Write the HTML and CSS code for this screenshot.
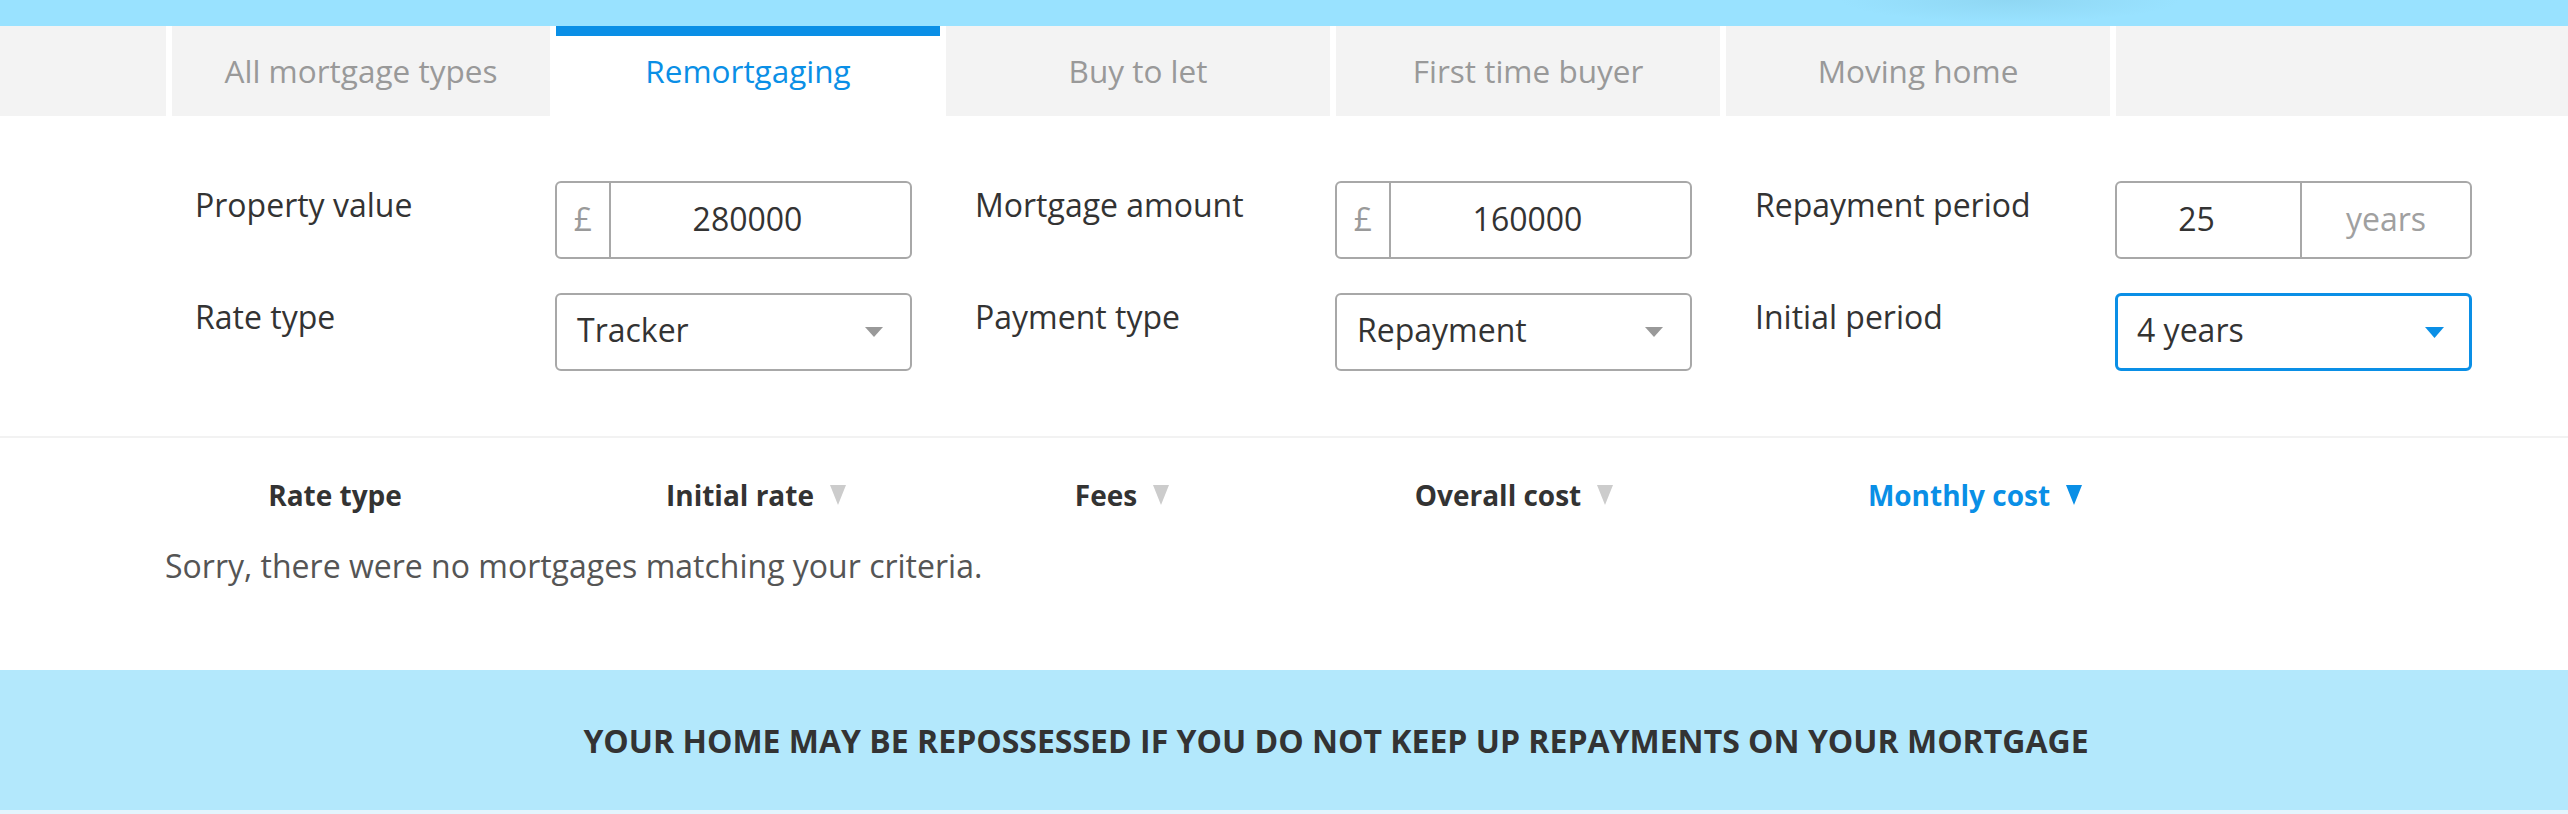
FILE: index.html
```html
<!DOCTYPE html>
<html lang="en">
<head>
<meta charset="utf-8">
<title>Mortgage calculator</title>
<link rel="stylesheet" href="styles.css">
</head>
<body>
<div class="topbar"></div>
<nav class="tabs">
  <div class="tab-spacer"></div>
  <a class="tab tab-first">All mortgage types</a>
  <a class="tab active">Remortgaging</a>
  <a class="tab">Buy to let</a>
  <a class="tab">First time buyer</a>
  <a class="tab">Moving home</a>
  <div class="tab-spacer tab-spacer-end"></div>
</nav>

<section class="calc">
  <div class="field">
    <span class="label">Property value</span>
    <div class="control group">
      <span class="prefix">£</span>
      <span class="value">280000</span>
    </div>
  </div>
  <div class="field">
    <span class="label">Mortgage amount</span>
    <div class="control group">
      <span class="prefix">£</span>
      <span class="value">160000</span>
    </div>
  </div>
  <div class="field">
    <span class="label">Repayment period</span>
    <div class="control group">
      <span class="value value-years">25</span>
      <span class="suffix">years</span>
    </div>
  </div>
  <div class="field">
    <span class="label">Rate type</span>
    <div class="control select">
      <span class="select-text">Tracker</span>
      <svg class="caret" width="18" height="10" viewBox="0 0 18 10"><polygon points="0,0 18,0 9,10" fill="#999"/></svg>
    </div>
  </div>
  <div class="field">
    <span class="label">Payment type</span>
    <div class="control select">
      <span class="select-text">Repayment</span>
      <svg class="caret" width="18" height="10" viewBox="0 0 18 10"><polygon points="0,0 18,0 9,10" fill="#999"/></svg>
    </div>
  </div>
  <div class="field">
    <span class="label">Initial period</span>
    <div class="control select focused">
      <span class="select-text">4 years</span>
      <svg class="caret" width="19" height="11" viewBox="0 0 19 11"><polygon points="0,0 19,0 9.5,11" fill="#0a8fe6"/></svg>
    </div>
  </div>
</section>

<section class="results">
  <div class="headers">
    <span class="col">Rate type</span>
    <span class="col">Initial rate <svg class="sort" width="20" height="20" viewBox="0 0 20 20"><polygon points="2,0 18,0 10,20" fill="#cccccc"/></svg></span>
    <span class="col">Fees <svg class="sort" width="20" height="20" viewBox="0 0 20 20"><polygon points="2,0 18,0 10,20" fill="#cccccc"/></svg></span>
    <span class="col">Overall cost <svg class="sort" width="20" height="20" viewBox="0 0 20 20"><polygon points="2,0 18,0 10,20" fill="#cccccc"/></svg></span>
    <span class="col col-active">Monthly cost <svg class="sort" width="20" height="20" viewBox="0 0 20 20"><polygon points="2,0 18,0 10,20" fill="#0a8fe6"/></svg></span>
  </div>
  <p class="empty">Sorry, there were no mortgages matching your criteria.</p>
</section>

<footer class="warning">YOUR HOME MAY BE REPOSSESSED IF YOU DO NOT KEEP UP REPAYMENTS ON YOUR MORTGAGE</footer>
</body>
</html>
```

FILE: styles.css
```css
html, body {
  margin: 0;
  padding: 0;
  background: #ffffff;
  font-family: "Open Sans", "Noto Sans", "Liberation Sans", sans-serif;
  color: #333333;
  overflow: hidden;
}

.topbar {
  height: 26px;
  background:
    radial-gradient(ellipse 170px 22px at 2010px 0px, rgba(110, 175, 200, 0.22), rgba(110, 175, 200, 0) 100%),
    #99e2ff;
}

.tabs {
  display: flex;
  gap: 6px;
  height: 90px;
  background: #ffffff;
}

.tab-spacer {
  width: 166px;
  background: #f3f3f3;
}

.tab-spacer-end {
  flex: 1;
}

.tab {
  width: 384px;
  background: #f3f3f3;
  color: #999999;
  font-size: 31.5px;
  line-height: 90px;
  text-align: center;
  text-decoration: none;
}

.tab-first {
  width: 378px;
}

.tab.active {
  background: #ffffff;
  color: #0a8fe6;
  box-shadow: inset 0 10px 0 #0a8fe6;
}

.calc {
  display: grid;
  grid-template-columns: repeat(3, 780px);
  row-gap: 34px;
  padding: 65px 0 65px 195px;
}

.field {
  display: flex;
  align-items: flex-start;
}

.label {
  width: 360px;
  font-size: 32px;
  line-height: 48px;
  color: #333333;
}

.control {
  box-sizing: border-box;
  width: 357px;
  height: 78px;
  border: 2px solid #a8a8a8;
  border-radius: 6px;
  font-size: 32px;
  color: #333333;
}

.group {
  display: flex;
  align-items: stretch;
}

.prefix {
  width: 52px;
  border-right: 2px solid #a8a8a8;
  color: #9a9a9a;
  display: flex;
  align-items: center;
  justify-content: center;
  padding-bottom: 3px;
}

.value {
  flex: 1;
  display: flex;
  align-items: center;
  justify-content: center;
  padding-right: 26px;
  padding-bottom: 3px;
}

.value-years {
  flex: 0 0 183px;
  box-sizing: border-box;
  padding-right: 24px;
}

.suffix {
  flex: 1;
  border-left: 2px solid #a8a8a8;
  color: #a0a0a0;
  display: flex;
  align-items: center;
  justify-content: center;
  padding-bottom: 3px;
}

.select {
  display: flex;
  align-items: center;
  justify-content: space-between;
  padding: 0 27px 0 20px;
}

.select-text {
  padding-bottom: 5px;
}

.select.focused {
  border: 3px solid #0a8fe6;
  padding: 0 25px 0 19px;
}

.caret {
  display: block;
}

.results {
  border-top: 2px solid #f2f2f2;
  padding: 37px 0 82px 165px;
}

.headers {
  display: grid;
  grid-template-columns: 340px 504px 228px 556px 366px;
  justify-items: center;
  font-size: 28px;
  font-weight: 700;
  line-height: 40px;
  color: #333333;
}

.col {
  display: flex;
  align-items: center;
  gap: 14px;
  white-space: nowrap;
}

.col-active {
  color: #0a8fe6;
}

.sort {
  display: block;
}

.empty {
  margin: 29px 0 0 0;
  font-size: 32px;
  line-height: 44px;
  color: #555555;
}

.warning {
  height: 144px;
  box-sizing: border-box;
  padding-left: 104px;
  display: flex;
  align-items: center;
  justify-content: center;
  background: #b3e8fc;
  border-bottom: 4px solid #e3f5fd;
  font-size: 32px;
  font-weight: 700;
  color: #333333;
}
```
